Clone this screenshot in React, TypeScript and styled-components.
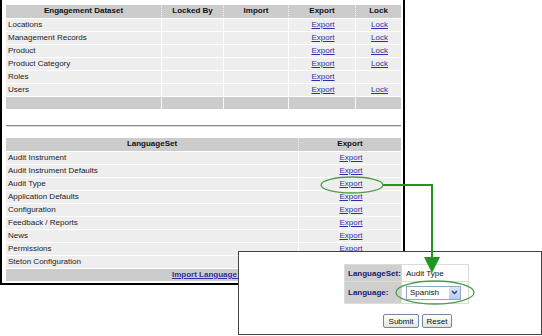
import React from 'react';
import styled, { createGlobalStyle } from 'styled-components';

const Global = createGlobalStyle`
  html, body { margin: 0; padding: 0; background: #fff; }
  body { font-family: "Liberation Sans", Arial, sans-serif; font-size: 8px; color: #222; }
`;

const Stage = styled.div`
  position: relative;
  width: 542px;
  height: 336px;
  overflow: hidden;
  background: #fff;
`;

const Window = styled.div`
  box-sizing: border-box;
  width: 405px;
  height: 285px;
  border: 2px solid #000;
  border-top: none;
  padding: 5px 0 0 4px;
`;

const Grid = styled.table`
  border-collapse: collapse;
  table-layout: fixed;
  width: 395px;
`;

const Row = styled.tr`
  height: 13px;
`;

const HeadCell = styled.th<{ $w?: number }>`
  width: ${(p) => (p.$w ? `${p.$w}px` : 'auto')};
  background: #cccccc;
  color: #111;
  font-weight: bold;
  font-size: 8px;
  text-align: center;
  padding: 0;
  line-height: 12px;
  border-right: 1px dotted #f4f4f4;
  border-bottom: 1px solid #fff;
  &:last-child { border-right: none; }
`;

const Cell = styled.td<{ $center?: boolean }>`
  background: #eeeeee;
  padding: 0 0 0 2px;
  line-height: 12px;
  font-size: 8px;
  color: #222;
  text-align: ${(p) => (p.$center ? 'center' : 'left')};
  border-right: 1px dotted #fff;
  border-bottom: 1px solid #fff;
  white-space: nowrap;
  overflow: hidden;
  &:last-child { border-right: none; }
`;

const FootCell = styled.td<{ $pad?: number }>`
  background: #cccccc;
  padding: 0 0 0 ${(p) => p.$pad ?? 0}px;
  line-height: 12px;
  border-right: 1px dotted #f4f4f4;
  white-space: nowrap;
  overflow: hidden;
  &:last-child { border-right: none; }
`;

const Link = styled.a<{ $bold?: boolean }>`
  color: #2f2fa8;
  text-decoration: underline;
  font-weight: ${(p) => (p.$bold ? 'bold' : 'normal')};
  cursor: pointer;
`;

const Rule = styled.div`
  width: 395px;
  height: 1px;
  border-top: 1px solid #8a8a8a;
  background: #dcdcdc;
  margin: 16px 0 11px;
`;

const Popup = styled.div`
  position: absolute;
  left: 238px;
  top: 251px;
  box-sizing: border-box;
  width: 304px;
  height: 84px;
  border: 1px solid #444;
  background: #fff;
  padding: 12px 0 0 105px;
  display: flex;
  flex-direction: column;
  align-items: flex-start;
  gap: 10px;
`;

const FormTable = styled.table`
  border-collapse: separate;
  border-spacing: 1px;
  background: #dcdcd4;
  width: 125px;
`;

const Label = styled.td<{ $h: number }>`
  width: 56px;
  height: ${(p) => p.$h}px;
  background: #cfcfcf;
  color: #1c1c6c;
  font-weight: bold;
  font-size: 8px;
  padding: 0 0 0 3px;
  box-sizing: border-box;
`;

const Value = styled.td`
  background: #fff;
  color: #111;
  font-size: 8px;
  padding: 0 0 0 4px;
`;

const Select = styled.div`
  box-sizing: border-box;
  width: 55px;
  height: 14px;
  border: 1px solid #8fa6c6;
  background: #fff;
  display: flex;
  align-items: center;
  justify-content: space-between;
  padding-left: 3px;
  font-size: 8px;
  color: #111;
`;

const SelectBtn = styled.span`
  width: 11px;
  height: 12px;
  background: linear-gradient(#dbe6f8, #b8cbee);
  display: flex;
  align-items: center;
  justify-content: center;
`;

const Buttons = styled.div`
  display: flex;
  gap: 3px;
  margin-left: 39px;
`;

const Button = styled.button<{ $w: number }>`
  box-sizing: border-box;
  width: ${(p) => p.$w}px;
  height: 14px;
  padding: 0;
  font-family: "Liberation Sans", Arial, sans-serif;
  font-size: 8px;
  color: #111;
  border: 1px solid #6f87a8;
  border-radius: 2px;
  background: linear-gradient(#ffffff, #e4e4dc);
`;

const Overlay = styled.svg`
  position: absolute;
  left: 0;
  top: 0;
  pointer-events: none;
`;

const engagement = [
  { name: 'Locations', lock: true },
  { name: 'Management Records', lock: true },
  { name: 'Product', lock: true },
  { name: 'Product Category', lock: true },
  { name: 'Roles', lock: false },
  { name: 'Users', lock: true },
];

const languageSets = [
  'Audit Instrument',
  'Audit Instrument Defaults',
  'Audit Type',
  'Application Defaults',
  'Configuration',
  'Feedback / Reports',
  'News',
  'Permissions',
  'Steton Configuration',
];

export default function App() {
  return (
    <Stage>
      <Global />
      <Window>
        <Grid>
          <thead>
            <Row>
              <HeadCell $w={155}>Engagement Dataset</HeadCell>
              <HeadCell $w={61}>Locked By</HeadCell>
              <HeadCell $w={64}>Import</HeadCell>
              <HeadCell $w={66}>Export</HeadCell>
              <HeadCell>Lock</HeadCell>
            </Row>
          </thead>
          <tbody>
            {engagement.map((r) => (
              <Row key={r.name}>
                <Cell>{r.name}</Cell>
                <Cell />
                <Cell />
                <Cell $center><Link>Export</Link></Cell>
                <Cell $center>{r.lock ? <Link>Lock</Link> : null}</Cell>
              </Row>
            ))}
            <Row>
              <FootCell />
              <FootCell />
              <FootCell />
              <FootCell />
              <FootCell />
            </Row>
          </tbody>
        </Grid>
        <Rule />
        <Grid>
          <thead>
            <Row>
              <HeadCell $w={292}>LanguageSet</HeadCell>
              <HeadCell>Export</HeadCell>
            </Row>
          </thead>
          <tbody>
            {languageSets.map((n) => (
              <Row key={n}>
                <Cell>{n}</Cell>
                <Cell $center><Link>Export</Link></Cell>
              </Row>
            ))}
            <Row>
              <FootCell colSpan={2} $pad={166}><Link $bold>Import Language Data</Link></FootCell>
            </Row>
          </tbody>
        </Grid>
      </Window>

      <Popup>
        <FormTable>
          <tbody>
            <tr>
              <Label $h={16}>LanguageSet:</Label>
              <Value>Audit Type</Value>
            </tr>
            <tr>
              <Label $h={21}>Language:</Label>
              <Value>
                <Select>
                  <span>Spanish</span>
                  <SelectBtn>
                    <svg width="7" height="5" viewBox="0 0 7 5">
                      <path d="M1 1 L3.5 3.5 L6 1" fill="none" stroke="#24407a" strokeWidth="1.4" />
                    </svg>
                  </SelectBtn>
                </Select>
              </Value>
            </tr>
          </tbody>
        </FormTable>
        <Buttons>
          <Button $w={36}>Submit</Button>
          <Button $w={30}>Reset</Button>
        </Buttons>
      </Popup>

      <Overlay width="542" height="336" viewBox="0 0 542 336">
        <ellipse cx="352" cy="185" rx="31" ry="8" fill="none" stroke="#4aa04a" strokeWidth="1.3" />
        <path d="M383 185 H432 V259" fill="none" stroke="#1f961f" strokeWidth="2" />
        <polygon points="424,257 440,257 432,273" fill="#1f961f" />
        <ellipse cx="435" cy="292.5" rx="39" ry="11.5" fill="none" stroke="#4aa04a" strokeWidth="1.3" />
      </Overlay>
    </Stage>
  );
}
